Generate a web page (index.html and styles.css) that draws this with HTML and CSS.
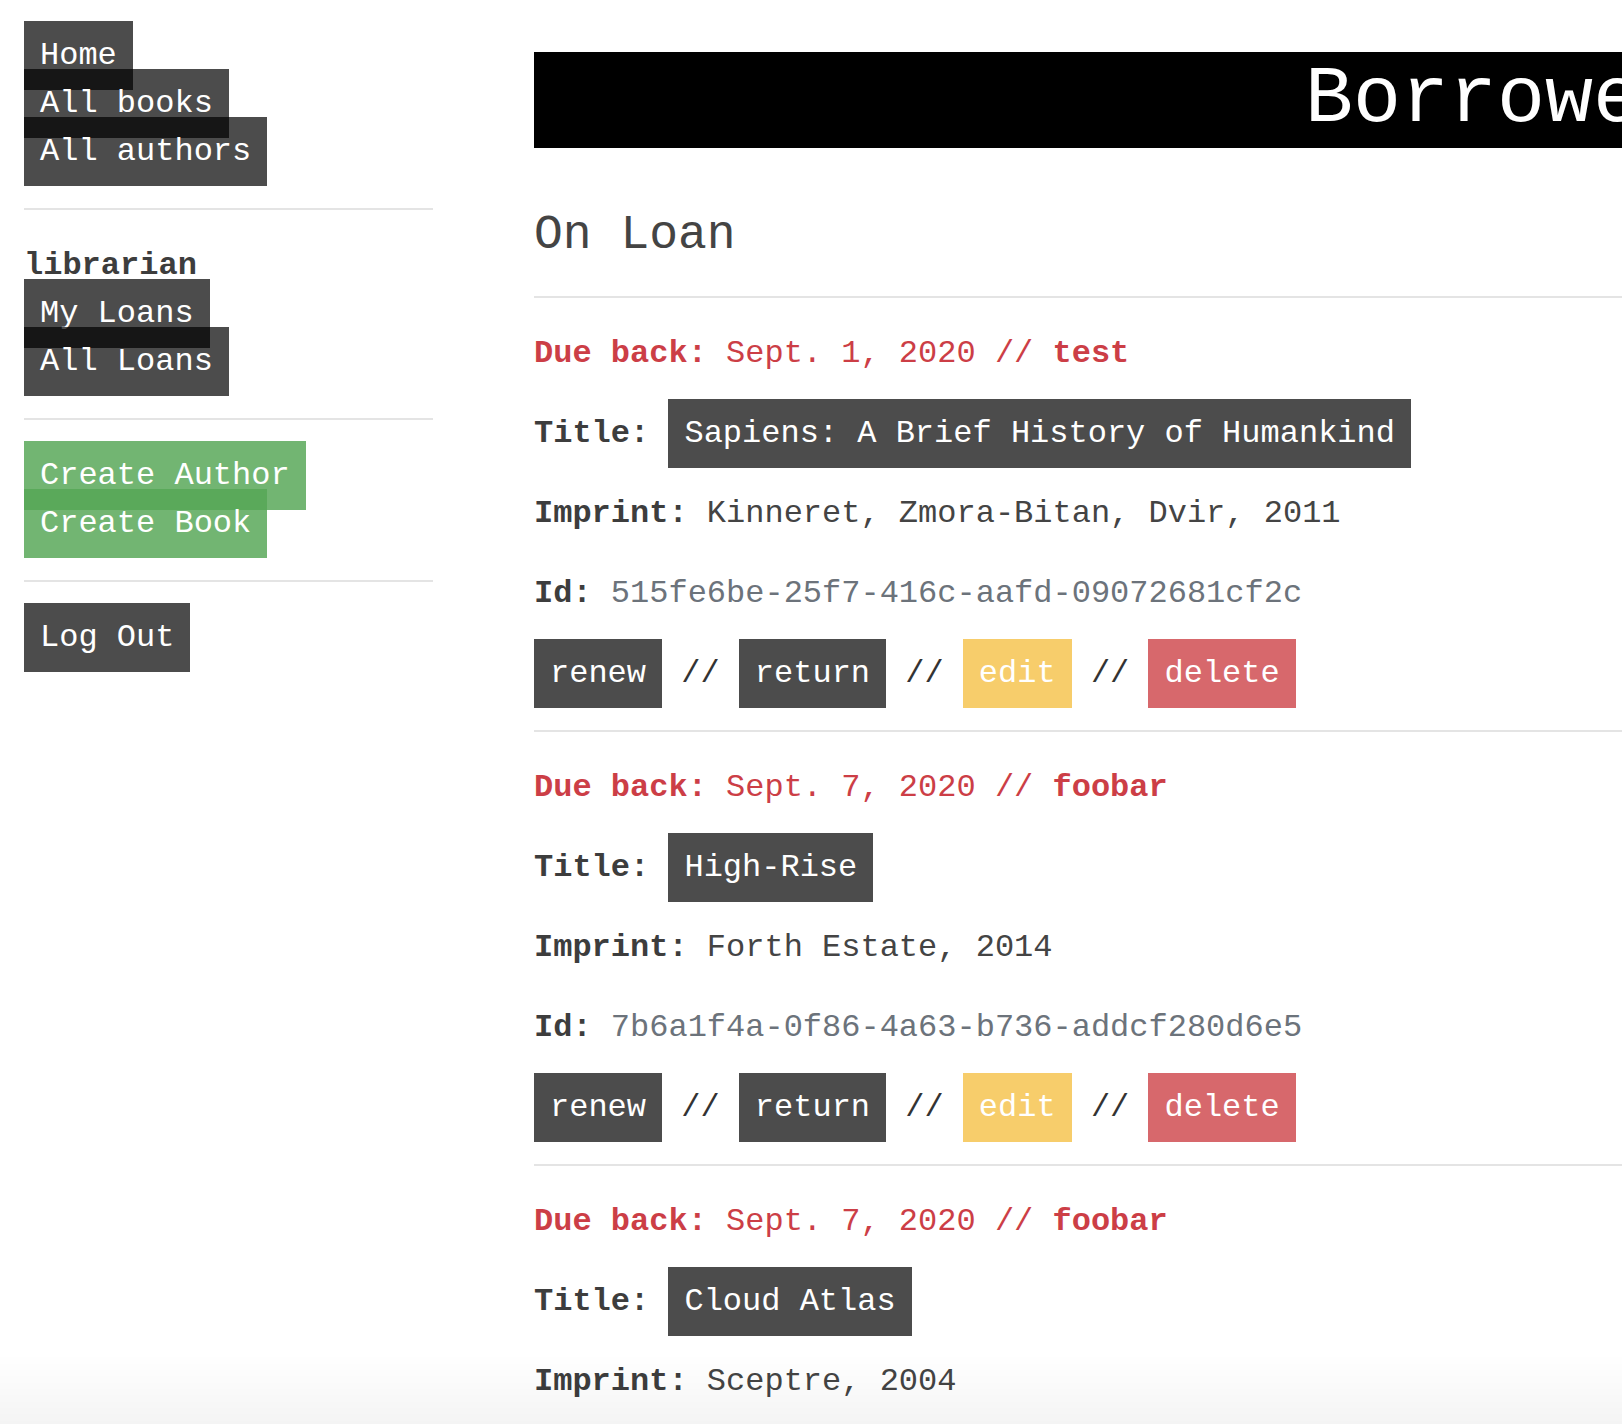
FILE: index.html
```html
<!DOCTYPE html>
<html lang="en">
<head>
<meta charset="utf-8">
<title>Borrowed books</title>
<link rel="stylesheet" href="styles.css">
</head>
<body>
<div class="page">
  <nav class="sidebar">
    <ul class="nav">
      <li><a class="btn" href="#">Home</a></li>
      <li><a class="btn" href="#">All books</a></li>
      <li><a class="btn" href="#">All authors</a></li>
    </ul>
    <hr class="rule">
    <ul class="nav">
      <li class="user">librarian</li>
      <li><a class="btn" href="#">My Loans</a></li>
      <li><a class="btn" href="#">All Loans</a></li>
    </ul>
    <hr class="rule">
    <ul class="nav">
      <li><a class="btn btn-green" href="#">Create Author</a></li>
      <li><a class="btn btn-green" href="#">Create Book</a></li>
    </ul>
    <hr class="rule">
    <ul class="nav">
      <li><a class="btn" href="#">Log Out</a></li>
    </ul>
  </nav>

  <main class="content">
    <h1 class="banner">Borrowed books</h1>
    <h2 class="section-title">On Loan</h2>
    <hr class="rule">

    <div class="loan">
      <p class="due"><b>Due back:</b> Sept. 1, 2020 // <b>test</b></p>
      <p><b>Title:</b> <a class="btn" href="#">Sapiens: A Brief History of Humankind</a></p>
      <p><b>Imprint:</b> Kinneret, Zmora-Bitan, Dvir, 2011</p>
      <p><b>Id:</b> <span class="id">515fe6be-25f7-416c-aafd-09072681cf2c</span></p>
      <p class="actions"><a class="btn" href="#">renew</a> // <a class="btn" href="#">return</a> // <a class="btn btn-yellow" href="#">edit</a> // <a class="btn btn-red" href="#">delete</a></p>
    </div>
    <hr class="rule">

    <div class="loan">
      <p class="due"><b>Due back:</b> Sept. 7, 2020 // <b>foobar</b></p>
      <p><b>Title:</b> <a class="btn" href="#">High-Rise</a></p>
      <p><b>Imprint:</b> Forth Estate, 2014</p>
      <p><b>Id:</b> <span class="id">7b6a1f4a-0f86-4a63-b736-addcf280d6e5</span></p>
      <p class="actions"><a class="btn" href="#">renew</a> // <a class="btn" href="#">return</a> // <a class="btn btn-yellow" href="#">edit</a> // <a class="btn btn-red" href="#">delete</a></p>
    </div>
    <hr class="rule">

    <div class="loan">
      <p class="due"><b>Due back:</b> Sept. 7, 2020 // <b>foobar</b></p>
      <p><b>Title:</b> <a class="btn" href="#">Cloud Atlas</a></p>
      <p><b>Imprint:</b> Sceptre, 2004</p>
      <p><b>Id:</b> <span class="id">3c1e0d2a-7f54-4b9e-9a61-5d2f8e0c7b14</span></p>
      <p class="actions"><a class="btn" href="#">renew</a> // <a class="btn" href="#">return</a> // <a class="btn btn-yellow" href="#">edit</a> // <a class="btn btn-red" href="#">delete</a></p>
    </div>
  </main>
</div>
</body>
</html>
```

FILE: styles.css
```css
html, body {
  margin: 0;
  padding: 0;
  height: 100%;
  overflow: hidden;
  background: #fff;
}

body {
  font-family: "Liberation Mono", "Courier New", monospace;
  font-size: 32px;
  line-height: 48px;
  color: #444;
}

body::after {
  content: "";
  position: fixed;
  left: 0;
  right: 0;
  bottom: 0;
  height: 70px;
  background: linear-gradient(to bottom, rgba(0, 0, 0, 0), rgba(0, 0, 0, 0.045));
  pointer-events: none;
}

.page {
  display: flex;
  align-items: flex-start;
  gap: 101px;
  padding-left: 24px;
}

.sidebar {
  flex: none;
  width: 409px;
}

.nav {
  list-style: none;
  margin: 32px 0;
  padding: 0;
}

.user {
  font-weight: bold;
  color: #3d3d3d;
}

.btn {
  display: inline;
  padding: 16px;
  background: rgba(0, 0, 0, 0.7);
  color: #fff;
  text-decoration: none;
  font-weight: normal;
}

.btn-green {
  background: rgba(86, 166, 86, 0.83);
}

.btn-yellow {
  background: #f7cd6b;
}

.btn-red {
  background: #d7686c;
}

.rule {
  border: 0;
  height: 2px;
  background: #e4e4e4;
  margin: 32px 0;
}

.content {
  flex: none;
  width: 2214px;
}

.banner {
  margin: 52px 0 59px;
  font-size: 80px;
  line-height: 96px;
  font-weight: normal;
  background: #000;
  color: #fff;
  text-align: center;
  white-space: nowrap;
}

.section-title {
  margin: 0 0 33px;
  font-size: 48px;
  line-height: 56px;
  font-weight: normal;
  color: #444;
}

.loan p {
  margin: 32px 0;
  white-space: nowrap;
}

.loan b {
  color: #3d3d3d;
}

.loan .due {
  color: #cc3e46;
}

.loan .due b {
  color: #cc3e46;
}

.id {
  color: #6c737b;
}

.actions {
  color: #333;
}
```
